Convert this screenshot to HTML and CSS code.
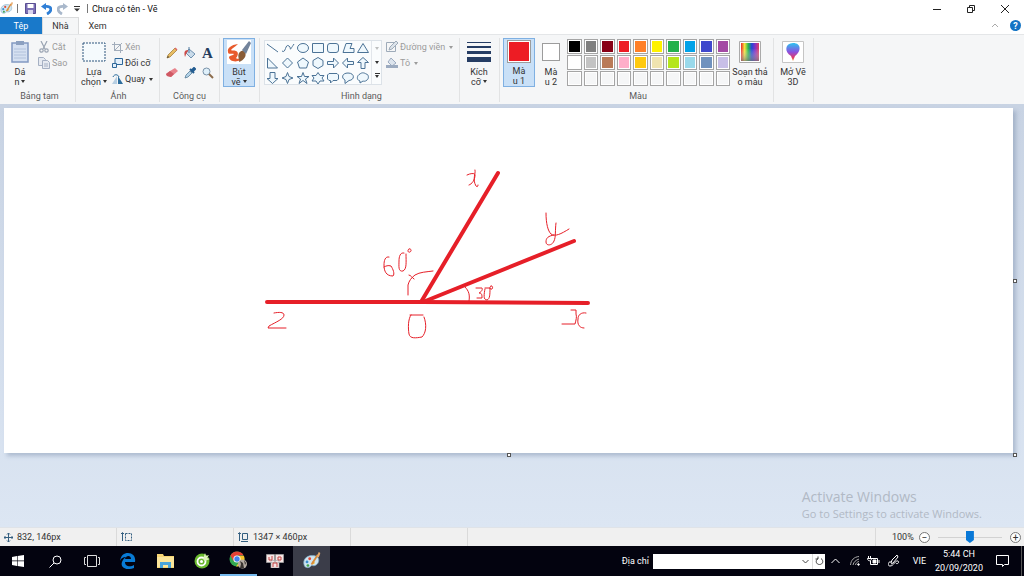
FILE: index.html
```html
<!DOCTYPE html>
<html lang="vi">
<head>
    <meta charset="UTF-8">
    <meta name="viewport" content="width=device-width, initial-scale=1.0">
    <title>Chưa có tên - Vẽ</title>
    <link rel="stylesheet" href="styles.css">
</head>
<body>
    <svg class="defs" aria-hidden="true">
        <defs>
            <linearGradient id="rainbow">
                <stop offset="0" stop-color="#e8262a"/>
                <stop offset=".2" stop-color="#f5e63c"/>
                <stop offset=".4" stop-color="#28b84c"/>
                <stop offset=".6" stop-color="#2446d8"/>
                <stop offset=".8" stop-color="#8a30c0"/>
                <stop offset="1" stop-color="#e04060"/>
            </linearGradient>
            <linearGradient id="fade" x2="0" y2="1">
                <stop offset=".3" stop-color="#fff" stop-opacity="0"/>
                <stop offset="1" stop-color="#777" stop-opacity=".7"/>
            </linearGradient>
            <linearGradient id="drop" x2="0" y2="1">
                <stop offset="0" stop-color="#2cc4f0"/>
                <stop offset=".5" stop-color="#8a50e0"/>
                <stop offset=".8" stop-color="#e03a6c"/>
                <stop offset="1" stop-color="#f59a30"/>
            </linearGradient>
            <symbol id="palette" viewBox="0 0 20 20">
                <path d="M9 4C3 5 0 10 2 15c1 3 5 3 7 1 1-2 3 0 5-1 5-2 5-8 2-10-2-1-4-1-7-1z" fill="#cfe6f2" stroke="#7aa7c4" stroke-width=".8"/>
                <circle cx="5" cy="11" r="1.6" fill="#3c8ed0"/><circle cx="8" cy="7.500" r="1.600" fill="#e04a3a"/>
                <circle cx="6" cy="15" r="1.500" fill="#41a34a"/><circle cx="12" cy="12" r="1.600" fill="#f0b832"/>
                <path d="M10 14L17 3" stroke="#d98b3a" stroke-width="2"/><path d="M16 5l2-5 2 1-2 5z" fill="#e6a96b"/>
            </symbol>
        </defs>
    </svg>

    <header class="title-bar">
        <svg class="app-icon" viewBox="0 0 20 20"><use href="#palette"/></svg>
        <span class="sep"></span>
        <button class="quick" aria-label="Lưu"><svg width="11" height="11" viewBox="0 0 11 11"><path d="M.5.5h10v10h-10z" fill="#7b6fb5" stroke="#5a4f93"/><path d="M2.500 1h6v4h-6z" fill="#fff"/><path d="M3 7h5v4H3z" fill="#d9d5ee"/></svg></button>
        <button class="quick" aria-label="Hoàn tác"><svg width="11" height="12" viewBox="0 0 11 12"><path d="M4 3.500c8-1 7 5 2 7.500" fill="none" stroke="#2f7fd6" stroke-width="2.800"/><path d="M0 3.500L5 0v7z" fill="#2f7fd6"/></svg></button>
        <button class="quick" aria-label="Làm lại"><svg width="11" height="12" viewBox="0 0 11 12"><path d="M7 3.500c-8-1-7 5-2 7.500" fill="none" stroke="#a9b8cb" stroke-width="2.800"/><path d="M11 3.500L6 0v7z" fill="#a9b8cb"/></svg></button>
        <button class="quick custom" aria-label="Tùy chỉnh"><svg width="6" height="6" viewBox="0 0 6 6"><path d="M0 .5h6" stroke="#333"/><path d="M0 2.500h6L3 5.500z" fill="#333"/></svg></button>
        <span class="sep"></span>
        <h1>Chưa có tên - Vẽ</h1>
        <div class="window-buttons">
            <button aria-label="Thu nhỏ"><svg width="8" height="8"><path d="M0 4.500h8" stroke="#222"/></svg></button>
            <button aria-label="Khôi phục"><svg width="8" height="8" fill="none" stroke="#222"><path d="M.5 2.500h5v5h-5zM2.500 2V.5h5v5H6"/></svg></button>
            <button aria-label="Đóng"><svg width="8" height="8" stroke="#222"><path d="M0 0l8 8M8 0L0 8"/></svg></button>
        </div>
    </header>

    <nav class="tabs">
        <a href="#" class="tab file">Tệp</a>
        <a href="#" class="tab active">Nhà</a>
        <a href="#" class="tab">Xem</a>
        <div class="tab-tools">
            <button aria-label="Thu gọn"><svg width="8" height="5" fill="none" stroke="#aaa"><path d="M1 4l3-3 3 3"/></svg></button>
            <button class="help" aria-label="Trợ giúp">?</button>
        </div>
    </nav>

    <section class="ribbon">
        <div class="group clipboard">
            <div class="group-body">
                <button class="big"><svg class="big-icon" viewBox="0 0 24 24"><path d="M4 3h16v19H4z" fill="#d5e0f1" stroke="#8299c2" stroke-width="1.500"/><path d="M8 1h8v4H8z" fill="#8ca0c0"/><path d="M6 9h12M6 12h12M6 15h12M6 18h12" stroke="#b2c2dc"/></svg><span>Dá<br>n<i class="arrow"></i></span></button>
                <div class="stack">
                    <button class="small" disabled><svg width="12" height="12" viewBox="0 0 12 12" fill="none" stroke="#9aa4b2" stroke-width="1.200"><path d="M3 0l4 8M9 0L5 8"/><circle cx="3.500" cy="9.500" r="1.700"/><circle cx="8.500" cy="9.500" r="1.700"/></svg>Cắt</button>
                    <button class="small" disabled><svg width="12" height="12" viewBox="0 0 12 12" fill="#e6eaf1" stroke="#a5b0c3"><path d="M.5.5h5l2 2v6h-7z"/><path d="M4.500 3.500h5l2 2v6h-7zM6 7h4M6 9h4"/></svg>Sao</button>
                </div>
            </div>
            <h2>Bảng tạm</h2>
        </div>
        <div class="group image">
            <div class="group-body">
                <button class="big"><svg class="big-icon" viewBox="0 0 24 24"><path d="M1 3h22v18H1z" fill="#f5fafd" stroke="#2c557d" stroke-dasharray="2 1"/></svg><span>Lựa<br>chọn<i class="arrow"></i></span></button>
                <div class="stack">
                    <button class="small" disabled><svg width="11" height="11" viewBox="0 0 11 11" fill="none" stroke="#a2adbb"><path d="M2.500 0v8.500H11M0 2.500h8.500V11M2 9l8-8"/></svg>Xén</button>
                    <button class="small"><svg width="11" height="11" viewBox="0 0 11 11" fill="#e3effa" stroke="#2d6799"><path d="M3 .5h7.500v6H3z"/><path d="M.5 5.500h4v4h-4z"/></svg>Đổi cỡ</button>
                    <button class="small"><svg width="11" height="11" viewBox="0 0 11 11"><path d="M5 2v8H0z" fill="#b6cee2"/><path d="M6 2v8h5z" fill="#2d6d9d"/><path d="M1 3c1-3 5-3 6 0" fill="none" stroke="#2d6d9d"/></svg>Quay<i class="arrow"></i></button>
                </div>
            </div>
            <h2>Ảnh</h2>
        </div>
        <div class="group tools">
            <div class="group-body tool-grid">
                <button aria-label="Bút chì"><svg viewBox="0 0 12 12"><path d="M1 11l1-3 7-7 2 2-7 7z" fill="#e8bd62" stroke="#9a7430" stroke-width=".7"/><path d="M9 1l2 2" stroke="#d66" stroke-width="1.500"/><path d="M1 11l1-2 1 1z" fill="#333"/></svg></button>
                <button aria-label="Tô màu"><svg viewBox="0 0 12 12"><path d="M5 2l6 5-4 4-5-5z" fill="#c9dbea" stroke="#537b9f" stroke-width=".8"/><path d="M5 6V0" stroke="#537b9f"/><path d="M4 3C0 3 0 6 1 10c1-2 1-4 3-6z" fill="#cf4c48"/></svg></button>
                <button class="letter" aria-label="Văn bản">A</button>
                <button aria-label="Tẩy"><svg viewBox="0 0 12 12"><path d="M4 4l5-3 3 3-7 6-4-1-1-2z" fill="#e8838c"/><path d="M0 7l4-3 4 3-3 3-4-1z" fill="#cf5964"/></svg></button>
                <button aria-label="Chọn màu"><svg viewBox="0 0 12 12"><path d="M1 11l1-3 4-4 2 2-4 4z" fill="#b4d3e8" stroke="#47708e" stroke-width=".7"/><path d="M6 2l4 4M7 4l3-3 1 1-3 3" stroke="#225c91" stroke-width="2"/></svg></button>
                <button aria-label="Phóng to"><svg viewBox="0 0 12 12"><circle cx="4.500" cy="4.500" r="3.500" fill="#dff0fa" stroke="#7992a8"/><path d="M7 7l4 4" stroke="#8b6c4d" stroke-width="2"/></svg></button>
            </div>
            <h2>Công cụ</h2>
        </div>
        <div class="group brushes">
            <div class="group-body">
                <button class="big selected"><svg class="big-icon" viewBox="0 0 24 24"><path d="M0 0h24v24H0z" fill="#fff"/><path d="M11 4C4 5 0 8 1 12c0 3 4 1 6 2-1 2-4 1-5 3 0 5 11 7 15-1-3 2-6 4-8 2 2-2 3-6 0-7-2-1-4 0-5-1 1-2 4-3 7-6z" fill="#e85a2c"/><path d="M12 13c3-3 5-3 6-1 2 4-1 8-6 10 1-3-2-5 0-9z" fill="#8a5c37"/><path d="M15 10l4 4 5-11-2-2z" fill="#72839b"/></svg><span>Bút<br>vẽ<i class="arrow"></i></span></button>
            </div>
        </div>
        <div class="group shapes">
            <div class="group-body">
                <div class="gallery">
                    <svg class="shape-list" viewBox="0 0 106 44" role="img" aria-label="Hình dạng">
                        <g fill="#eff8fd" stroke="#4c7396">
                            <path d="M2 3l11 8"/>
                            <path d="M17 10c4 3 3-8 7-5 3 2-1 7 5-2" fill="none"/>
                            <ellipse cx="38" cy="7" rx="5.500" ry="4.500"/>
                            <path d="M47.500 2.500h11v9h-11z"/>
                            <rect x="62.500" y="2.500" width="11" height="9" rx="2.500"/>
                            <path d="M78 11.500l3-9h6l-2 5h4v4z"/>
                            <path d="M98 2.500l5.500 9h-11z"/>
                            <path d="M2.500 17v10h10z"/>
                            <path d="M22.500 17l5 5-5 5-5-5z"/>
                            <path d="M38 17l5.500 4-2 6h-7l-2-6z"/>
                            <path d="M53 16.500l5 3v5l-5 3-5-3v-5z"/>
                            <path d="M62.500 20.500h6V17l5 5-5 5v-3.500h-6z"/>
                            <path d="M88.500 20.500h-6V17l-5 5 5 5v-3.500h6z"/>
                            <path d="M96 27.500v-6h-3.500l5.500-5 5.500 5H100v6z"/>
                            <path d="M5 31.500v6H2l5.500 5 5.500-5h-3v-6z"/>
                            <path d="M22.500 31.500l1.500 4 4 1.500-4 1.500-1.500 4-1.500-4-4-1.500 4-1.500z"/>
                            <path d="M38 31.500l1.500 4H44l-3.500 2.500 1.500 4.500-4-3-4 3 1.500-4.500-3.500-2.500h4.500z"/>
                            <path d="M53 31.500l2 3h4L57 37l2 3h-4l-2 3-2-3h-4l2-3-2-2.500h4z"/>
                            <path d="M64 32.500h8l1.500 1.500v4L72 39.500h-4L65.500 42v-2.500H64L62.500 38v-4z"/>
                            <path d="M83 32c7 0 7 7 1 7.500l-4 3v-3.500c-4-2-3-7 3-7z"/>
                            <path d="M95 33c2-2 5-1 6 0 3 0 3 5 1 6-2 2-4 1-4 1l-3 2v-2c-4-1-3-6 0-7z"/>
                        </g>
                    </svg>
                    <div class="gallery-scroll">
                        <button aria-label="Lên"><i class="arrow up"></i></button>
                        <button aria-label="Xuống"><i class="arrow"></i></button>
                        <button aria-label="Thêm" class="more"><i class="arrow"></i></button>
                    </div>
                </div>
                <div class="stack">
                    <button class="small" disabled><svg width="12" height="12" viewBox="0 0 12 12" fill="none" stroke="#9eabb9"><path d="M8 1.500H.5v9h9V5"/><path d="M3 9l1-3 6-6 2 2-6 6z" fill="#dce3ea"/></svg>Đường viền<i class="arrow"></i></button>
                    <button class="small" disabled><svg width="12" height="12" viewBox="0 0 12 12"><path d="M5 1l5 5-4 3-4-4z" fill="#dce4ed" stroke="#9cabc0"/><path d="M0 8h12v3H0z" fill="#9cabc0"/></svg>Tô<i class="arrow"></i></button>
                </div>
            </div>
            <h2>Hình dạng</h2>
        </div>
        <div class="group size">
            <div class="group-body">
                <button class="big"><svg class="big-icon" viewBox="0 0 24 24" fill="#253c63"><path d="M0 2h24v1H0zM0 6h24v2H0zM0 11h24v3H0zM0 17h24v5H0z"/></svg><span>Kích<br>cỡ<i class="arrow"></i></span></button>
            </div>
        </div>
        <div class="group colors">
            <div class="group-body">
                <button class="big selected"><span class="color-box primary"></span><span>Mà<br>u 1</span></button>
                <button class="big"><span class="color-box secondary"></span><span>Mà<br>u 2</span></button>
                <div class="swatches">
                    <button class="swatch" style="background:#000" aria-label="Đen"></button>
                    <button class="swatch" style="background:#7f7f7f" aria-label="Xám"></button>
                    <button class="swatch" style="background:#880015" aria-label="Đỏ sẫm"></button>
                    <button class="swatch" style="background:#ed1c24" aria-label="Đỏ"></button>
                    <button class="swatch" style="background:#ff7f27" aria-label="Cam"></button>
                    <button class="swatch" style="background:#fff200" aria-label="Vàng"></button>
                    <button class="swatch" style="background:#22b14c" aria-label="Lục"></button>
                    <button class="swatch" style="background:#00a2e8" aria-label="Ngọc lam"></button>
                    <button class="swatch" style="background:#3f48cc" aria-label="Chàm"></button>
                    <button class="swatch" style="background:#a349a4" aria-label="Tím"></button>
                    <button class="swatch" style="background:#fff" aria-label="Trắng"></button>
                    <button class="swatch" style="background:#c3c3c3" aria-label="Xám nhạt"></button>
                    <button class="swatch" style="background:#b97a57" aria-label="Nâu"></button>
                    <button class="swatch" style="background:#ffaec9" aria-label="Hồng"></button>
                    <button class="swatch" style="background:#ffc90e" aria-label="Vàng kim"></button>
                    <button class="swatch" style="background:#efe4b0" aria-label="Vàng nhạt"></button>
                    <button class="swatch" style="background:#b5e61d" aria-label="Lá mạ"></button>
                    <button class="swatch" style="background:#99d9ea" aria-label="Lam nhạt"></button>
                    <button class="swatch" style="background:#7092be" aria-label="Xanh xám"></button>
                    <button class="swatch" style="background:#c8bfe7" aria-label="Oải hương"></button>
                    <button class="swatch" aria-label="Trống"></button>
                    <button class="swatch" aria-label="Trống"></button>
                    <button class="swatch" aria-label="Trống"></button>
                    <button class="swatch" aria-label="Trống"></button>
                    <button class="swatch" aria-label="Trống"></button>
                    <button class="swatch" aria-label="Trống"></button>
                    <button class="swatch" aria-label="Trống"></button>
                    <button class="swatch" aria-label="Trống"></button>
                    <button class="swatch" aria-label="Trống"></button>
                    <button class="swatch" aria-label="Trống"></button>
                </div>
                <button class="big edit"><svg class="big-icon" viewBox="0 0 24 24"><path d="M1.500 1.500h21v21h-21z" fill="#fff" stroke="#aaa"/><path d="M3 3h18v18H3z" fill="url(#rainbow)"/><path d="M3 3h18v18H3z" fill="url(#fade)"/></svg><span>Soạn thả<br>o màu</span></button>
            </div>
            <h2>Màu</h2>
        </div>
        <div class="group paint3d">
            <div class="group-body">
                <button class="big"><svg class="big-icon" viewBox="0 0 24 24"><path d="M1.500 1.500h21v21h-21z" fill="#fff" stroke="#c5c5c5"/><path d="M12 3c9 0 8 9 2 13l-2 5-2-5C3 12 4 3 12 3z" fill="url(#drop)"/></svg><span>Mở Vẽ<br>3D</span></button>
            </div>
        </div>
    </section>

    <main class="workspace">
        <div class="paper">
            <svg class="drawing" viewBox="4 108 1009 345" preserveAspectRatio="xMinYMin meet" fill="none" stroke="#e61f28" stroke-linecap="round" stroke-linejoin="round">
                <g stroke-width="4">
                    <path d="M267 302h154l167 1"/>
                    <path d="M421 302l77-129"/>
                    <path d="M423 302l151-61"/>
                </g>
                <g stroke-width="1">
                    <path d="M467 175c4-2 8-2 8 0 0 5-3 9-6 10M475 170c1 4-3 9 1 16 1 1 2 1 2-1"/>
                    <path d="M546 213c0 11 2 18 5 21 4 3 10 0 18-5M556 223c-1 7 0 14-2 18-2 5-8 5-8 1 0-4 2-6 8-7"/>
                    <path d="M389 257c-4-1-5 4-5 8 0 6 2 11 9 11 2-2 0-7-2-10-3-1-5 0-7 1"/>
                    <path d="M404 253c-4-1-5 4-5 8 0 5-1 11 4 10 4-2 3-9 3-17M409 249c-2 1-1 4 1 3 2-1 1-4-1-3"/>
                    <path d="M408 295v-10c1-4 3-7 7-10 5-3 11-3 18-4M409 275c2 0 3 3 5 4"/>
                    <path d="M465 287c4 4 5 8 4 14"/>
                    <path d="M476 288h6c1 2-1 4-3 5 3 0 3 2 3 5h-5M485 289c-1 5-2 11 2 11 3-1 3-6 3-12h-5M491 286c-2 1-1 4 1 3 1-2 1-3-1-3"/>
                    <path d="M274 313c5-1 10-1 10 2 0 4-8 7-15 11l-1 2h18"/>
                    <path d="M410 315h13M411 315c-3 4-3 13-2 19 1 5 7 4 13 3 4-4 5-12 2-20"/>
                    <path d="M571 310h5v4c1 3 0 6-1 10h-13M586 313c-5-1-8 2-8 6-1 6 2 9 6 9"/>
                </g>
            </svg>
            <i class="handle right"></i>
            <i class="handle bottom"></i>
            <i class="handle corner"></i>
        </div>
        <div class="watermark">
            <p class="watermark-title">Activate Windows</p>
            <p>Go to Settings to activate Windows.</p>
        </div>
    </main>

    <footer class="status-bar">
        <div class="status"><svg width="9" height="9" stroke="#345f80" fill="none"><path d="M4.500 0v9M0 4.500h9M3 1.500l1.500-1.500L6 1.500M3 7.500L4.500 9 6 7.500M1.500 3L0 4.500 1.500 6M7.500 3L9 4.500 7.500 6"/></svg>832, 146px</div>
        <div class="status"><svg width="11" height="10" fill="none" stroke="#345f80"><path d="M1.500 9V1M0 2l1.500-1.500L3 2"/><path d="M4.500 1.500h6v7h-6z" stroke-dasharray="2 1"/></svg></div>
        <div class="status"><svg width="11" height="10" fill="none" stroke="#345f80"><path d="M1.500 9V1M0 2l1.500-1.500L3 2M4.500 1.500h5v6h-5zM3 9.500h7"/></svg>1347 × 460px</div>
        <div class="status"></div>
        <div class="zoom">
            <span>100%</span>
            <button aria-label="Thu nhỏ">−</button>
            <input type="range" min="0" max="100" value="50" aria-label="Thu phóng">
            <button aria-label="Phóng to">+</button>
        </div>
    </footer>

    <div class="taskbar">
        <div class="apps">
            <button aria-label="Start"><svg width="12" height="12" viewBox="0 0 12 12" fill="#fff"><path d="M0 2l5-1v4.600H0zM5.600.9L12 0v5.600H5.600zM0 6.200h5v4.700L0 10zM5.600 6.200H12V12l-6.400-1z"/></svg></button>
            <button aria-label="Tìm kiếm"><svg width="13" height="13" viewBox="0 0 13 13" fill="none" stroke="#fff"><circle cx="8" cy="5" r="4"/><path d="M5 8l-4.500 4.500"/></svg></button>
            <button aria-label="Dạng xem tác vụ"><svg width="16" height="12" viewBox="0 0 16 12" fill="none" stroke="#ddd"><path d="M3.500.5h9v11h-9zM2 2.500H.5v7H2M14 2.500h1.500v7H14"/></svg></button>
            <button aria-label="Edge"><svg width="16" height="16" viewBox="0 0 16 16"><path d="M0 8C1 2 4 0 8 0c5 0 8 4 7 9H5c0 5 6 5 9 3v3C6 18 0 14 2 9c1-3 3-5 5-5-5 0-6 2-7 4zm5-2h6c0-4-5-4-6 0z" fill="#087bd5" fill-rule="evenodd"/></svg></button>
            <button aria-label="File Explorer"><svg width="17" height="14" viewBox="0 0 17 14"><path d="M0 0h6l1 2h10v12H0z" fill="#f7d573"/><path d="M0 3h17v10H0z" fill="#fbe59a"/><path d="M3 14V8h11v6h-3v-3H6v3z" fill="#49a4d9"/></svg></button>
            <button aria-label="Cốc Cốc"><svg width="16" height="16" viewBox="0 0 16 16"><circle cx="8" cy="8" r="7.500" fill="#69b82e"/><circle cx="7.500" cy="8.500" r="4" fill="none" stroke="#fff" stroke-width="1.800"/><circle cx="7.500" cy="8.500" r="1.500" fill="#fff"/><path d="M9 6l2-6 1 3 3-1-2 3 3 1-5 2z" fill="#ddf0bb"/></svg></button>
            <button class="open" aria-label="Chrome"><svg width="18" height="18" viewBox="0 0 18 18"><circle cx="8" cy="8" r="7.500" fill="#32a852"/><path d="M8 .5c3 0 5 1 6.700 4H8L4.500 10 1.400 4.500C3 2 5 .5 8 .5z" fill="#e64135"/><path d="M8 5h7c2 6-2 11-8 10.500L11 10z" fill="#f6c629"/><circle cx="8" cy="8" r="3.600" fill="#fff"/><circle cx="8" cy="8" r="2.700" fill="#4482ed"/><circle cx="13.500" cy="13" r="4.500" fill="#b3aaa1"/><path d="M11 10l3 2 1 5h-4l1-4zM15 9l2 3-1 2z" fill="#383330"/></svg></button>
            <button aria-label="UniKey"><svg width="18" height="14" viewBox="0 0 18 14"><path d="M.5.500h8v8h-8zM9.500.500h8v8h-8zM5 6.500h8V14H5z" fill="#f6e5e5" stroke="#aaa" stroke-width=".7"/><path d="M3 3v3h3V2M12 3h3v3h-3zM7 13V9h4v4" stroke="#c24545" fill="none"/></svg></button>
            <button class="current" aria-label="Vẽ"><svg width="19" height="18" viewBox="0 0 20 20"><use href="#palette"/></svg></button>
        </div>
        <div class="tray">
            <label for="address">Địa chỉ</label>
            <div class="address">
                <input type="text" id="address">
                <button aria-label="Danh sách"><svg width="7" height="5" fill="none" stroke="#444"><path d="M.5 1l3 3 3-3"/></svg></button>
                <button class="reload" aria-label="Làm mới"><svg width="9" height="10" fill="none" stroke="#444"><path d="M3 2.500c-3 2-2 6 1.500 6s4.500-4 1.500-6M3 .5v2.500H.5"/></svg></button>
            </div>
            <button class="tray-icon" aria-label="Hiện biểu tượng ẩn"><svg width="9" height="6" fill="none" stroke="#fff"><path d="M.5 5l4-4 4 4"/></svg></button>
            <button class="tray-icon" aria-label="Mạng"><svg width="10" height="10" fill="none" stroke="#aaa"><path d="M.5 9C1 4 4 1 9 .5M3 9c.5-3 3-5 6-6M5.500 9C6 7 7 6 9 5.500"/><circle cx="8.500" cy="8.500" r=".8" fill="#fff" stroke="#fff"/></svg></button>
            <button class="tray-icon" aria-label="Pin"><svg width="13" height="10" fill="none" stroke="#fff"><path d="M4 2.500h6.500v6h-7V5M12 4v3M1.500 0v2M3.500 0v2M.5 2.500h4c0 3-4 3-4 0z"/><path d="M6 4h3v3H6z" fill="#fff"/></svg></button>
            <button class="tray-icon pen" aria-label="Windows Ink"><svg width="12" height="12" viewBox="0 0 12 12" fill="none" stroke="#fff"><path d="M3 8l1-3 5-5 1 2-5 6-2 1M3 7c-3-1-4 4-1 4 4 0 5-6 8-5 2 1-1 4-2 2"/></svg></button>
            <button class="lang">VIE</button>
            <button class="clock">5:44 CH<br>20/09/2020</button>
            <button class="notice" aria-label="Thông báo"><svg width="13" height="12" fill="none" stroke="#fff"><path d="M.5.500h12v9h-4L6.500 11.500v-2h-6z"/></svg></button>
        </div>
    </div>
</body>
</html>
```

FILE: styles.css
```css
* {
    box-sizing: border-box;
}
body {
    margin: 0;
    height: 100vh;
    display: flex;
    flex-direction: column;
    overflow: hidden;
    background: #fff;
    color: #333;
    font-family: Roboto, "Noto Sans", sans-serif;
    font-size: 9px;
    line-height: 10px;
}
button {
    display: flex;
    align-items: center;
    justify-content: center;
    padding: 0;
    border: 0;
    background: none;
    color: inherit;
    font: inherit;
    cursor: pointer;
}
h1, h2, p {
    margin: 0;
    font-weight: normal;
}
svg {
    display: block;
    flex-shrink: 0;
}
.defs {
    position: absolute;
    width: 0;
    height: 0;
}
.arrow {
    display: inline-block;
    flex-shrink: 0;
    margin-left: 2px;
    border: 2px solid transparent;
    border-top: 3px solid currentColor;
    border-bottom: 0;
    vertical-align: 2px;
}

/* title bar */
.title-bar {
    display: flex;
    align-items: center;
    height: 17px;
}
.app-icon {
    width: 13px;
    height: 13px;
}
.sep {
    width: 1px;
    height: 9px;
    margin: 0 4px;
    background: #777;
}
.quick {
    width: 16px;
    height: 16px;
}
.quick.custom {
    width: 13px;
}
.title-bar h1 {
    font-size: 9px;
    line-height: 16px;
    color: #111;
}
.window-buttons {
    display: flex;
    margin: 0 2px 0 auto;
}
.window-buttons button {
    width: 34px;
    height: 16px;
}

/* tabs */
.tabs {
    display: flex;
    height: 17px;
}
.tab {
    width: 37px;
    line-height: 18px;
    text-align: center;
    text-decoration: none;
    color: #333;
}
.tab.file {
    width: 42px;
    background: #1979ca;
    color: #fff;
}
.tab.active {
    background: #f5f6f7;
    box-shadow: inset 1px 1px #dadbdc, inset -1px 0 #dadbdc;
}
.tab-tools {
    display: flex;
    align-items: center;
    gap: 11px;
    margin: 0 3px 0 auto;
}
.help {
    width: 11px;
    height: 11px;
    border-radius: 50%;
    background: #1474c4;
    color: #fff;
    font-weight: bold;
}

/* ribbon */
.ribbon {
    display: flex;
    height: 70px;
    padding-top: 3px;
    background: #f5f6f7;
    border-top: 1px solid #e4e6e8;
}
.group {
    display: flex;
    flex-direction: column;
    height: 64px;
    border-right: 1px solid #e2e3e4;
}
.group-body {
    display: flex;
    height: 50px;
}
.group h2 {
    margin-top: 3px;
    font-size: 9px;
    line-height: 12px;
    text-align: center;
    color: #5a5a5a;
}
.clipboard {
    width: 76px;
    padding-left: 4px;
}
.image {
    width: 84px;
    padding-left: 2px;
}
.tools {
    width: 60px;
}
.brushes {
    width: 40px;
    padding-left: 3px;
}
.shapes {
    width: 200px;
    padding-left: 4px;
}
.size {
    width: 40px;
    padding-left: 3px;
}
.colors {
    width: 274px;
    padding-left: 3px;
}
.paint3d {
    width: 40px;
    padding-left: 3px;
}
.big {
    display: flex;
    flex-direction: column;
    justify-content: flex-start;
    gap: 3px;
    width: 32px;
    height: 49px;
    padding-top: 2px;
    white-space: nowrap;
}
.big.selected {
    padding-top: 1px;
    background: #c9e0f7;
    border: 1px solid #7fb0e2;
}
.big-icon {
    width: 24px;
    height: 24px;
}
.stack {
    display: flex;
    flex-direction: column;
    gap: 4px;
    padding-top: 3px;
}
.small {
    justify-content: flex-start;
    gap: 2px;
    height: 12px;
    white-space: nowrap;
}
.small:disabled {
    color: #9b9b9b;
}
.clipboard .stack {
    margin-left: 2px;
}
.image .stack {
    margin-left: 2px;
}
.tool-grid {
    display: grid;
    grid-template-columns: repeat(3, 18px);
    grid-template-rows: 20px 20px;
    justify-content: center;
    align-content: center;
}
.tool-grid svg {
    width: 12px;
    height: 12px;
}
.letter {
    font-family: "Liberation Serif", serif;
    font-size: 15px;
    font-weight: bold;
    color: #243d5e;
}
.gallery {
    display: flex;
    width: 118px;
    height: 45px;
    margin: 2px 4px 0 0;
    border: 1px solid #dce2e8;
    background: #fafcfd;
}
.shape-list {
    width: 106px;
    height: 44px;
}
.gallery-scroll {
    display: grid;
    flex: 1;
    border-left: 1px solid #e2e6eb;
}
.gallery-scroll .arrow {
    margin: 0;
}
.gallery-scroll .up {
    opacity: 0.3;
}
.more .arrow {
    position: relative;
}
.more .arrow::before {
    content: "";
    position: absolute;
    top: -5px;
    left: -2px;
    width: 5px;
    height: 1px;
    background: #333;
}
.color-box {
    width: 24px;
    height: 24px;
    border: 1px solid #9c9c9c;
    box-shadow: inset 0 0 0 1px #fff;
}
.primary {
    background: #ed1c24;
}
.secondary {
    width: 18px;
    height: 18px;
    margin: 3px 0;
    background: #fff;
}
.swatches {
    display: grid;
    grid-template-columns: repeat(10, 1fr);
    grid-template-rows: repeat(3, 15px);
    gap: 1px 2px;
    width: 163px;
    margin-top: 1px;
}
.swatch {
    border: 1px solid #a5a5a5;
    box-shadow: inset 0 0 0 1px #fff;
}
.edit {
    width: 40px;
}

/* canvas */
.workspace {
    position: relative;
    flex: 1;
    display: flex;
    min-height: 0;
    padding: 4px 11px 74px 4px;
    background: linear-gradient(#c8d3e3, #dce6f3);
}
.paper {
    position: relative;
    flex: 1;
    background: #fff;
    box-shadow: 3px 3px 4px rgba(110, 130, 160, 0.4);
}
.drawing {
    width: 100%;
}
.handle {
    position: absolute;
    width: 4px;
    height: 4px;
    border: 1px solid #555;
    background: #fff;
}
.handle.right {
    top: 50%;
    right: -4px;
    margin-top: -2px;
}
.handle.bottom {
    bottom: -4px;
    left: 50%;
    margin-left: -2px;
}
.handle.corner {
    right: -4px;
    bottom: -4px;
}
.watermark {
    position: absolute;
    right: 42px;
    bottom: 6px;
    font-family: "Open Sans", sans-serif;
    font-size: 11px;
    line-height: 14px;
    color: #b1b9c5;
}
.watermark-title {
    font-size: 14px;
    line-height: 20px;
}

/* status bar */
.status-bar {
    display: flex;
    height: 19px;
    background: #f0f0f0;
    border-top: 1px solid #dfe3e8;
    line-height: 18px;
}
.status {
    display: flex;
    align-items: center;
    gap: 4px;
    width: 117px;
    padding-left: 4px;
    border-right: 1px solid #dadada;
}
.zoom {
    display: flex;
    align-items: center;
    gap: 5px;
    width: 149px;
    margin-left: auto;
    padding: 0 3px 0 16px;
    border-left: 1px solid #dadada;
}
.zoom button {
    flex-shrink: 0;
    width: 11px;
    height: 11px;
    border: 1px solid #777;
    border-radius: 50%;
    background: #fff;
    font-size: 10px;
    line-height: 9px;
}
.zoom input {
    appearance: none;
    flex: 1;
    min-width: 0;
    height: 14px;
    margin: 0 3px;
    background: linear-gradient(#d2d2d2, #d2d2d2) center / 100% 1px no-repeat;
}
.zoom input::-webkit-slider-thumb {
    appearance: none;
    width: 8px;
    height: 12px;
    background: #0878d7;
    clip-path: polygon(0 0, 100% 0, 100% 75%, 50% 100%, 0 75%);
}

/* taskbar */
.taskbar {
    display: flex;
    justify-content: space-between;
    height: 30px;
    background: #03030f;
    color: #fff;
}
.apps {
    display: flex;
    width: 330px;
}
.apps button {
    flex: 1;
}
.apps .open {
    border-bottom: 2px solid #76b9ed;
}
.apps .current {
    background: #3b3d49;
}
.tray {
    display: flex;
    align-items: center;
}
.address {
    display: flex;
    width: 172px;
    height: 15px;
    margin: 0 1px 0 4px;
    background: #fff;
}
.address input {
    flex: 1;
    min-width: 0;
    padding: 0 2px;
    border: 0;
    font: inherit;
}
.address button {
    width: 13px;
}
.address .reload {
    border-left: 1px solid #ddd;
}
.tray-icon {
    width: 19px;
    height: 30px;
}
.tray-icon.pen {
    width: 22px;
}
.lang {
    width: 29px;
    height: 30px;
}
.clock {
    width: 50px;
    height: 30px;
    line-height: 14px;
}
.notice {
    width: 38px;
    height: 30px;
    margin-right: 2px;
    border-right: 1px solid #555;
}
```
